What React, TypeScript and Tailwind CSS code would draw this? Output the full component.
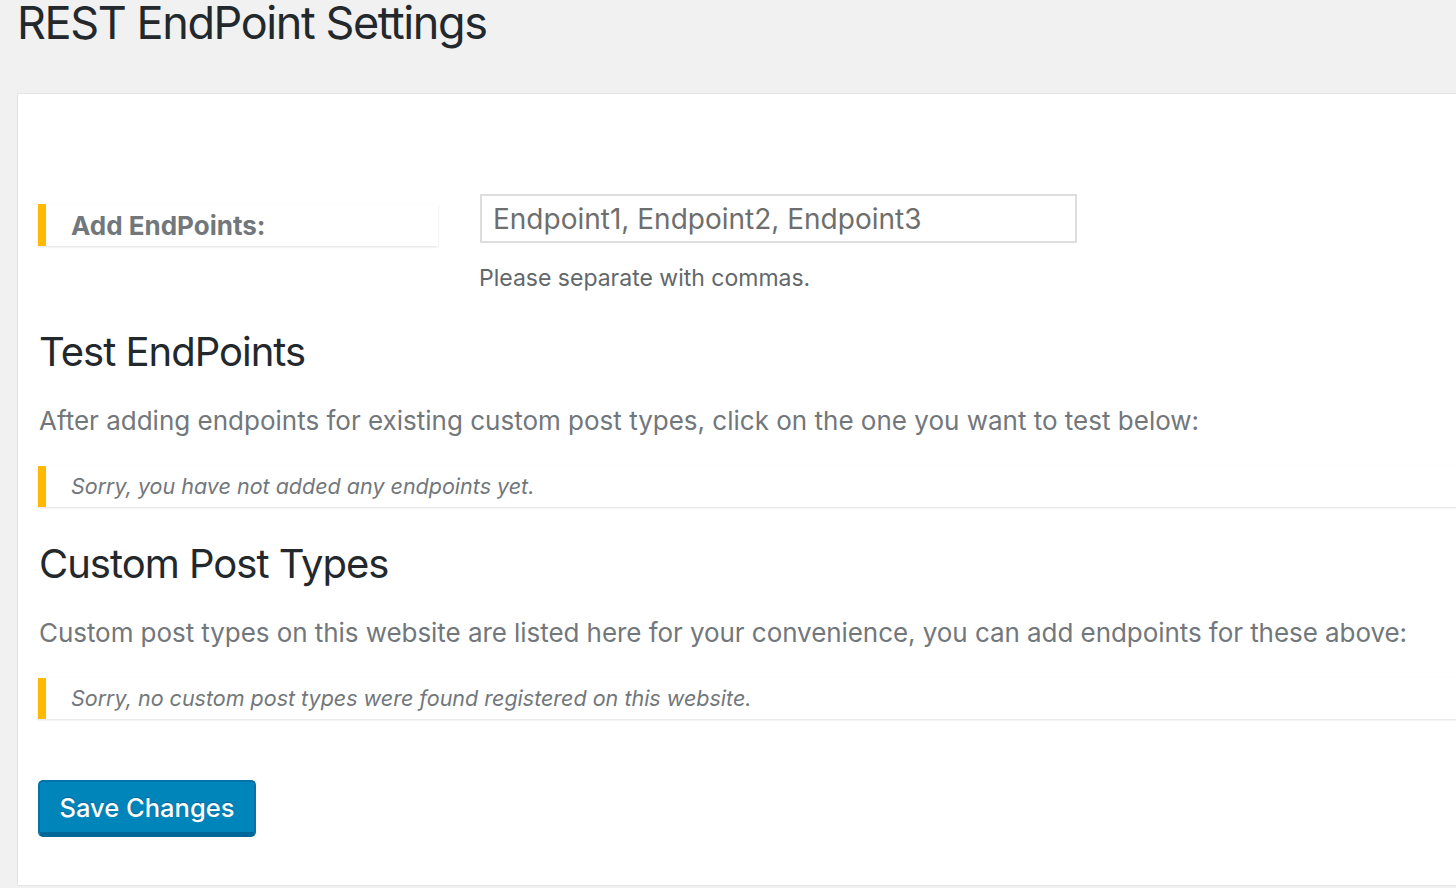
import React from "react";

export default function App() {
  return (
    <div className="min-h-[888px] h-[888px] bg-[#f1f1f1] overflow-hidden font-['Inter','Noto_Sans',sans-serif]">
      <h1 className="pl-[17px] text-[45px] leading-[46px] font-normal text-[#23282d] tracking-[-1.4px]">
        REST EndPoint Settings
      </h1>
      <div className="ml-[17px] mr-[-40px] mt-[47px] bg-white border border-[#e5e5e5] pl-[20px] pt-[100px] pb-[48px]">
        <div className="flex items-start">
          <div className="mt-[10px] w-[400px] h-[42px] flex items-center border-l-[8px] border-[#ffb900] bg-white shadow-[0_1px_2px_rgba(0,0,0,0.12)] pl-[25px]">
            <span className="text-[26px] font-bold text-[#72777c]">Add EndPoints:</span>
          </div>
          <div className="ml-[42px] flex flex-col">
            <div className="w-[597px] h-[49px] border-2 border-[#dddddd] flex items-center pl-[11px] text-[28px] text-[#6e6e6e]">
              Endpoint1, Endpoint2, Endpoint3
            </div>
            <p className="mt-[20px] text-[23px] leading-[30px] text-[#62676c] ml-[-1px]">
              Please separate with commas.
            </p>
          </div>
        </div>

        <h2 className="mt-[34px] text-[40px] leading-[50px] tracking-[-1px] text-[#23282d] ml-[1px]">Test EndPoints</h2>
        <p className="mt-[26px] text-[26px] leading-[36px] text-[#72777c] ml-[1px]">
          After adding endpoints for existing custom post types, click on the one you want to test below:
        </p>
        <div className="mt-[27px] h-[41px] flex items-center border-l-[8px] border-[#ffb900] bg-white shadow-[0_1px_2px_rgba(0,0,0,0.12)] pl-[25px]">
          <em className="text-[21.5px] text-[#72777c]">Sorry, you have not added any endpoints yet.</em>
        </div>

        <h2 className="mt-[32px] text-[40px] leading-[50px] tracking-[-1px] text-[#23282d] ml-[1px]">Custom Post Types</h2>
        <p className="mt-[26px] text-[26px] leading-[36px] tracking-[-0.06px] text-[#72777c] ml-[1px]">
          Custom post types on this website are listed here for your convenience, you can add endpoints for these above:
        </p>
        <div className="mt-[27px] h-[41px] flex items-center border-l-[8px] border-[#ffb900] bg-white shadow-[0_1px_2px_rgba(0,0,0,0.12)] pl-[25px]">
          <em className="text-[21.5px] text-[#72777c]">Sorry, no custom post types were found registered on this website.</em>
        </div>

        <button className="mt-[61px] w-[218px] h-[57px] rounded-[5px] bg-[#0085ba] border-2 border-[#0073aa] border-b-[5px] border-b-[#006799] text-white text-[25.5px] font-medium [text-shadow:0_-1px_1px_#006799] flex items-center justify-center pt-[2px]">
          Save Changes
        </button>
      </div>
    </div>
  );
}
